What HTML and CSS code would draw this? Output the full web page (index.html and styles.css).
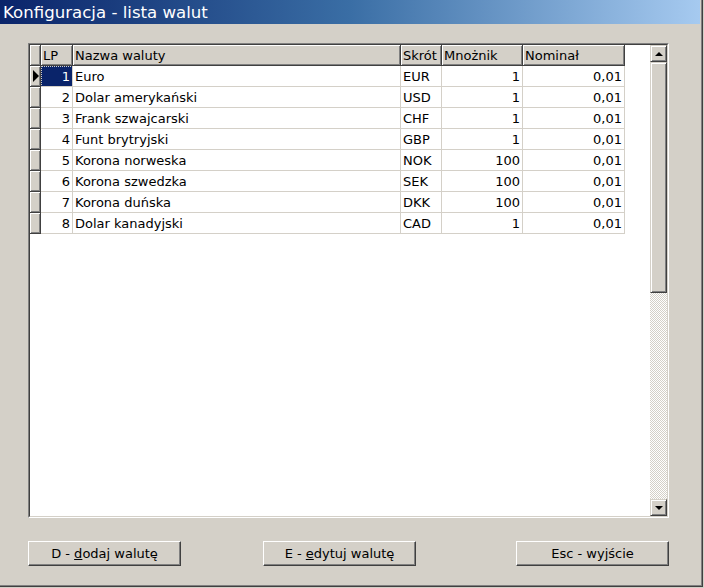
FILE: index.html
```html
<!DOCTYPE html>
<html lang="pl">
<head>
<meta charset="utf-8">
<title>Konfiguracja - lista walut</title>
<link rel="stylesheet" href="styles.css">
</head>
<body>
<div class="window">
  <div class="titlebar">Konfiguracja - lista walut</div>
  <div class="client">
    <div class="gridbox">
      <div class="gridbox-inner">
        <div class="grid-area">
          <div class="row head">
            <div class="hcell"></div>
            <div class="hcell">LP</div>
            <div class="hcell">Nazwa waluty</div>
            <div class="hcell">Skrót</div>
            <div class="hcell">Mnożnik</div>
            <div class="hcell">Nominał</div>
          </div>
          <div class="row">
            <div class="ind current"><span class="tri"></span></div>
            <div class="cell num selected">1</div>
            <div class="cell">Euro</div>
            <div class="cell">EUR</div>
            <div class="cell num">1</div>
            <div class="cell num">0,01</div>
          </div>
          <div class="row">
            <div class="ind"></div>
            <div class="cell num">2</div>
            <div class="cell">Dolar amerykański</div>
            <div class="cell">USD</div>
            <div class="cell num">1</div>
            <div class="cell num">0,01</div>
          </div>
          <div class="row">
            <div class="ind"></div>
            <div class="cell num">3</div>
            <div class="cell">Frank szwajcarski</div>
            <div class="cell">CHF</div>
            <div class="cell num">1</div>
            <div class="cell num">0,01</div>
          </div>
          <div class="row">
            <div class="ind"></div>
            <div class="cell num">4</div>
            <div class="cell">Funt brytryjski</div>
            <div class="cell">GBP</div>
            <div class="cell num">1</div>
            <div class="cell num">0,01</div>
          </div>
          <div class="row">
            <div class="ind"></div>
            <div class="cell num">5</div>
            <div class="cell">Korona norweska</div>
            <div class="cell">NOK</div>
            <div class="cell num">100</div>
            <div class="cell num">0,01</div>
          </div>
          <div class="row">
            <div class="ind"></div>
            <div class="cell num">6</div>
            <div class="cell">Korona szwedzka</div>
            <div class="cell">SEK</div>
            <div class="cell num">100</div>
            <div class="cell num">0,01</div>
          </div>
          <div class="row">
            <div class="ind"></div>
            <div class="cell num">7</div>
            <div class="cell">Korona duńska</div>
            <div class="cell">DKK</div>
            <div class="cell num">100</div>
            <div class="cell num">0,01</div>
          </div>
          <div class="row">
            <div class="ind"></div>
            <div class="cell num">8</div>
            <div class="cell">Dolar kanadyjski</div>
            <div class="cell">CAD</div>
            <div class="cell num">1</div>
            <div class="cell num">0,01</div>
          </div>
        </div>
        <div class="vscroll">
          <div class="sb-btn"><span class="arrow-up"></span></div>
          <div class="sb-thumb"></div>
          <div class="sb-track"></div>
          <div class="sb-btn"><span class="arrow-down"></span></div>
        </div>
      </div>
    </div>
    <div class="buttons">
      <div class="btn">D - <u>d</u>odaj walutę</div>
      <div class="btn btn-mid">E - <u>e</u>dytuj walutę</div>
      <div class="btn btn-right">Esc - wyjście</div>
    </div>
  </div>
</div>
</body>
</html>
```

FILE: styles.css
```css
html, body {
  margin: 0;
  padding: 0;
  background: #d4d0c8;
}
body {
  font-family: "DejaVu Sans", Verdana, sans-serif;
  font-size: 13px;
  color: #000;
}
.window {
  width: 704px;
  height: 588px;
  box-sizing: border-box;
  background: #d4d0c8;
  border-right: 1px solid #d4d0c8;
  border-bottom: 1px solid #d4d0c8;
  position: relative;
}
.window::after {
  content: "";
  position: absolute;
  inset: 0;
  box-shadow: inset -1px -1px #404040, inset -2px -2px #808080;
  pointer-events: none;
}
.titlebar {
  height: 24px;
  margin-right: 3px;
  background: linear-gradient(to right, #0a246a 0%, #3a6ea5 50%, #a6caf0 100%);
  color: #fff;
  font-size: 16.6px;
  line-height: 25px;
  padding-left: 3px;
  white-space: nowrap;
}
.client {
  padding: 19px 0 0 28px;
}
.gridbox {
  width: 641px;
  height: 475px;
  box-sizing: border-box;
  border: 1px solid;
  border-color: #808080 #ffffff #ffffff #808080;
}
.gridbox-inner {
  height: 100%;
  box-sizing: border-box;
  border: 1px solid;
  border-color: #404040 #d4d0c8 #d4d0c8 #404040;
  display: flex;
  background: #fff;
}
.grid-area {
  width: 620px;
  background: #fff;
}
.row {
  display: grid;
  grid-template-columns: 11px 32px 328px 41px 81px 102px;
  height: 21px;
}
.hcell, .ind {
  box-sizing: border-box;
  background: #d4d0c8;
  border-right: 1px solid #404040;
  border-bottom: 1px solid #404040;
  box-shadow: inset 1px 1px #ffffff, inset -1px -1px #808080;
  line-height: 20px;
  padding-top: 1px;
  padding-left: 2px;
  white-space: nowrap;
  overflow: hidden;
}
.ind {
  padding: 0;
  display: flex;
  align-items: center;
  justify-content: center;
}
.tri {
  width: 0;
  height: 0;
  border-top: 6px solid transparent;
  border-bottom: 6px solid transparent;
  border-left: 6px solid #000;
  margin-left: 1px;
}
.cell {
  box-sizing: border-box;
  border-right: 1px solid #d4d0c8;
  border-bottom: 1px solid #d4d0c8;
  line-height: 19px;
  padding: 1px 2px 0 2px;
  white-space: nowrap;
  overflow: hidden;
}
.num {
  text-align: right;
}
.selected {
  background: #0a246a;
  color: #fff;
  outline: 1px dotted #d4d0c8;
  outline-offset: -1px;
}
.vscroll {
  width: 17px;
  display: flex;
  flex-direction: column;
}
.sb-btn, .sb-thumb {
  box-sizing: border-box;
  background: #d4d0c8;
  border: 1px solid;
  border-color: #d4d0c8 #404040 #404040 #d4d0c8;
  box-shadow: inset 1px 1px #ffffff, inset -1px -1px #808080;
}
.sb-btn {
  height: 17px;
  display: flex;
  align-items: center;
  justify-content: center;
}
.sb-thumb {
  height: 231px;
}
.sb-track {
  flex: 1;
  background: repeating-conic-gradient(#d4d0c8 0 25%, #ffffff 0 50%) 0 0 / 2px 2px;
}
.arrow-up {
  width: 0;
  height: 0;
  border-left: 4px solid transparent;
  border-right: 4px solid transparent;
  border-bottom: 4px solid #000;
}
.arrow-down {
  width: 0;
  height: 0;
  border-left: 4px solid transparent;
  border-right: 4px solid transparent;
  border-top: 4px solid #000;
}
.buttons {
  display: flex;
  margin-top: 23px;
}
.btn {
  width: 153px;
  height: 25px;
  box-sizing: border-box;
  background: #d4d0c8;
  border: 1px solid;
  border-color: #ffffff #404040 #404040 #ffffff;
  box-shadow: inset -1px -1px #808080;
  text-align: center;
  line-height: 23px;
  white-space: nowrap;
}
.btn-mid {
  margin-left: 82px;
}
.btn-right {
  margin-left: 100px;
}
```
